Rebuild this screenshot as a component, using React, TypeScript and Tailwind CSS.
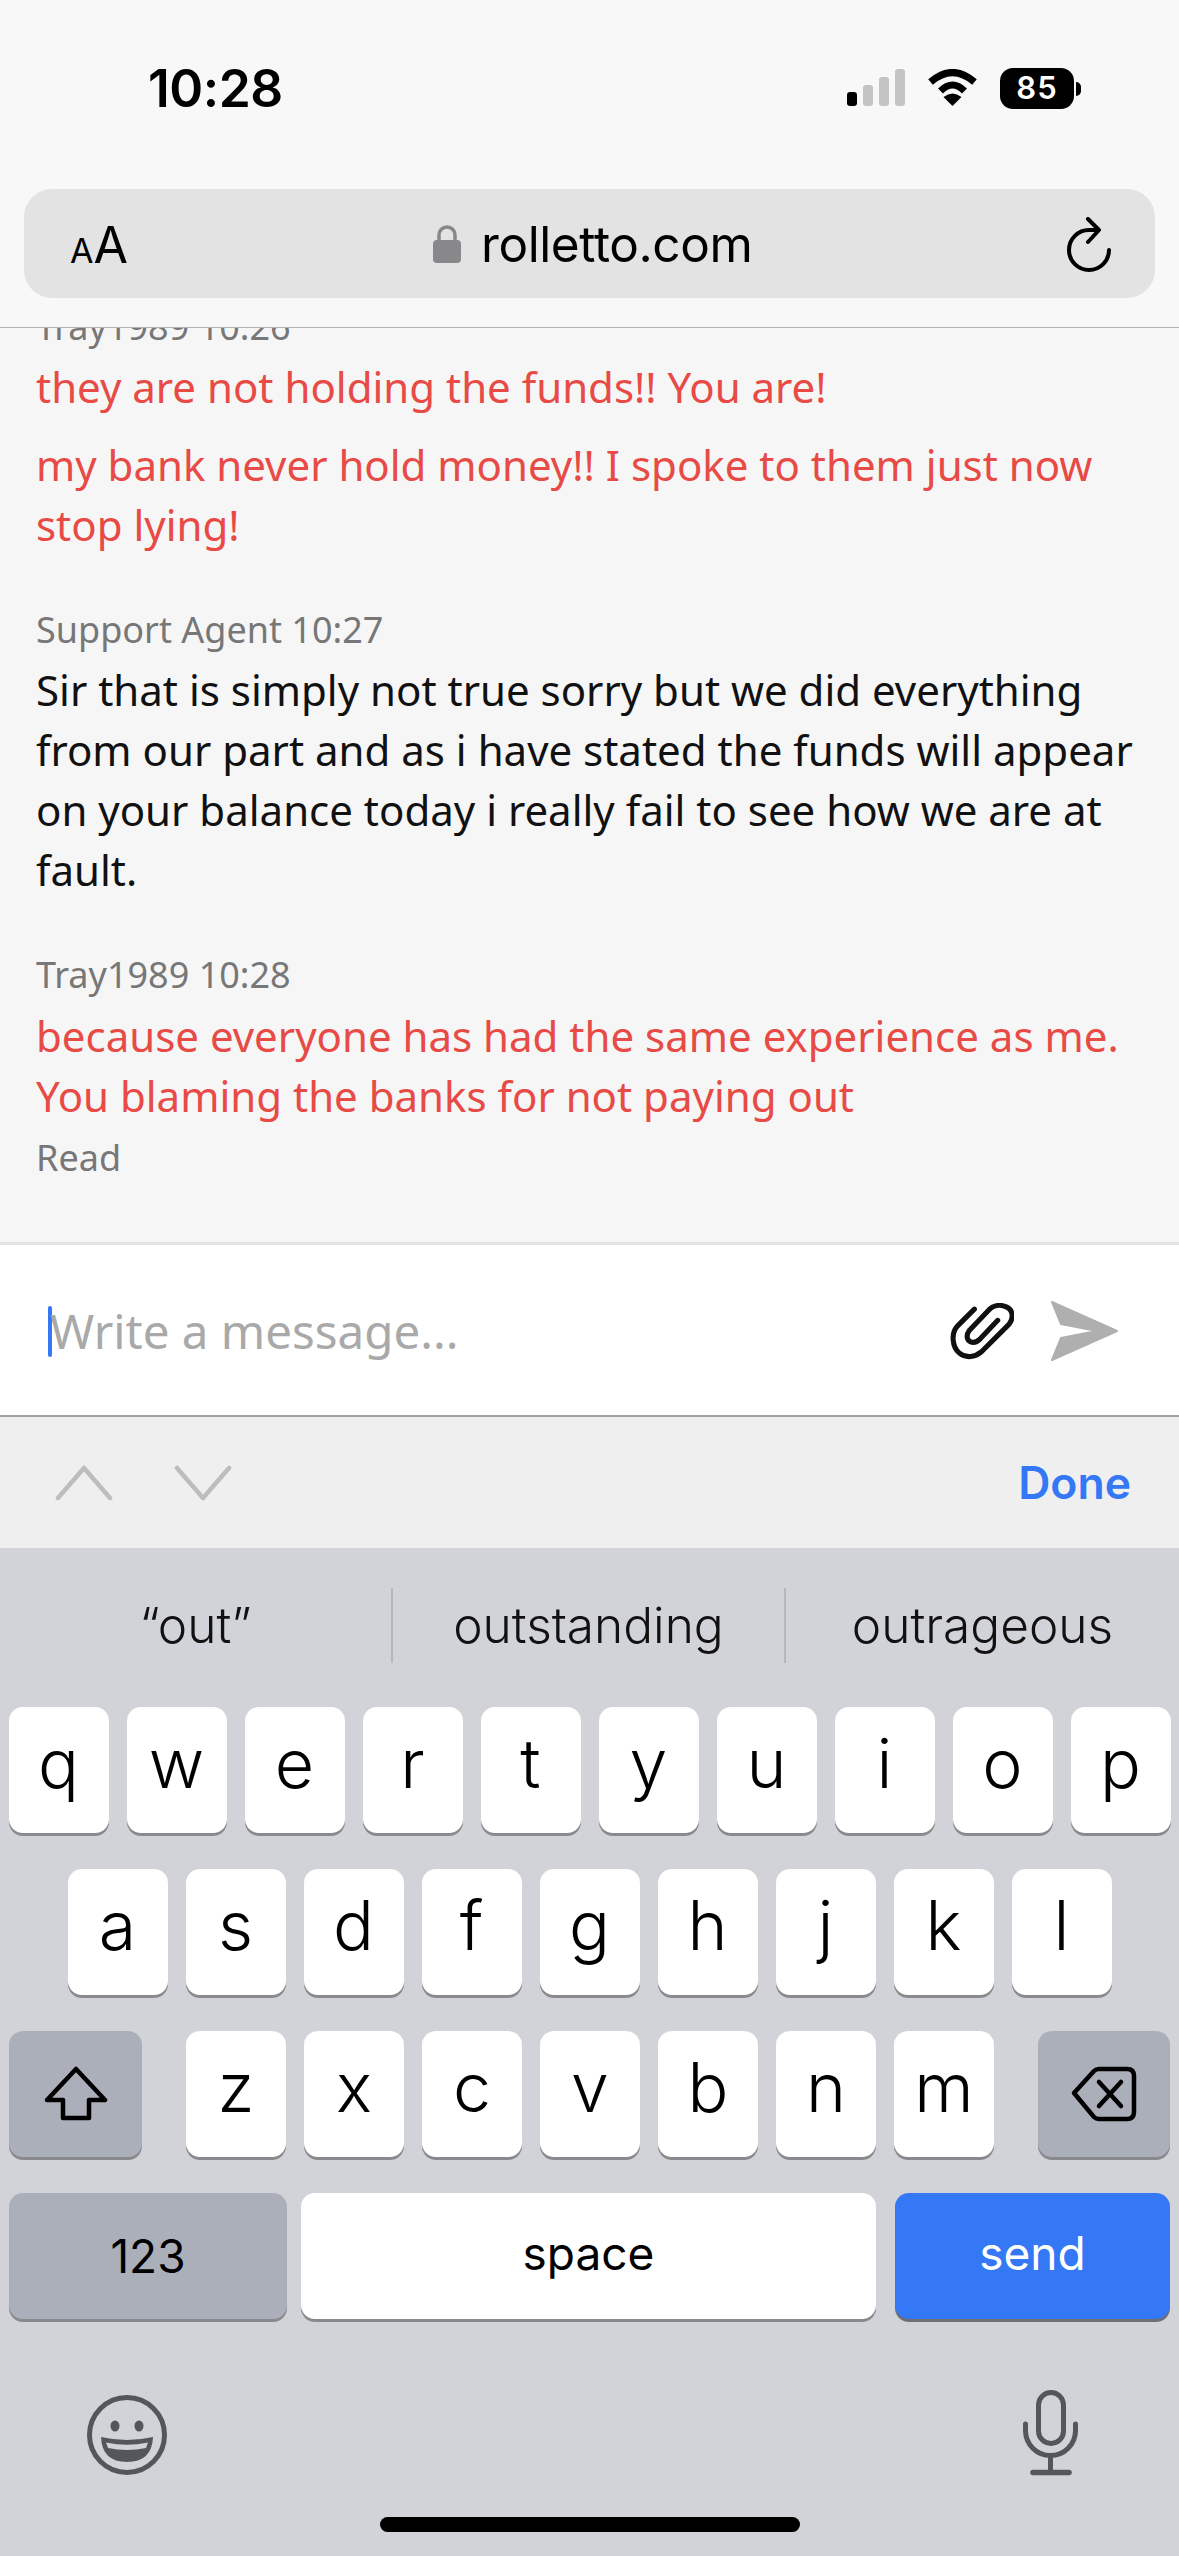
const sans = "font-['Noto_Sans','Open_Sans',sans-serif]";
const ui = "font-['Inter','Liberation_Sans',sans-serif]";

function Key({ label, w = "w-[100px]" }: { label: string; w?: string }) {
  return (
    <div className={`${w} h-[126px] rounded-[14px] bg-white shadow-[0_3px_0_#898a8d] flex items-center justify-center text-[68px] font-light text-black leading-none pb-[14px]`}>
      {label}
    </div>
  );
}

function Shift() {
  return (
    <div className="w-[133px] h-[126px] rounded-[14px] bg-[#abafb9] shadow-[0_3px_0_#898a8d] flex items-center justify-center">
      <svg width="64" height="56" viewBox="0 0 64 56" fill="none" stroke="#000" strokeWidth="4.5" strokeLinejoin="round">
        <path d="M32 3 L61 34 H45 V52 H19 V34 H3 Z" />
      </svg>
    </div>
  );
}

function Del() {
  return (
    <div className="w-[132px] h-[126px] rounded-[14px] bg-[#abafb9] shadow-[0_3px_0_#898a8d] flex items-center justify-center">
      <svg width="66" height="56" viewBox="0 0 66 56" fill="none" stroke="#000" strokeWidth="4.5" strokeLinejoin="round" strokeLinecap="round">
        <path d="M3 27 L23 5 Q25 3 28 3 H56 Q63 3 63 10 V46 Q63 53 56 53 H28 Q25 53 23 51 Z" />
        <path d="M28 16 L50 40 M50 16 L28 40" />
      </svg>
    </div>
  );
}

function Row({ letters }: { letters: string }) {
  return (
    <>
      {letters.split("").map((l) => (
        <Key key={l} label={l} />
      ))}
    </>
  );
}

export default function App() {
  return (
    <div className={`w-[1179px] h-[2556px] flex flex-col overflow-hidden bg-[#d1d3d9] ${ui}`}>
      {/* Browser chrome */}
      <header className="h-[328px] shrink-0 bg-[#f8f8f8] border-b border-[#b1b1b3] px-[24px] flex flex-col">
        <div className="h-[189px] shrink-0 flex justify-between pt-[61px] pl-[124px] pr-[74px]">
          <span className="text-[51.5px] font-semibold leading-[54px] text-black tracking-[-0.5px]">10:28</span>
          <div className="flex items-start gap-[22px] pt-[7px]">
            <svg width="58" height="37" viewBox="0 0 58 37" className="mt-[1px]">
              <rect x="0" y="23" width="10" height="14" rx="3" fill="#000" />
              <rect x="16" y="16" width="10" height="21" rx="3" fill="#c4c4c4" />
              <rect x="32" y="8" width="10" height="29" rx="3" fill="#c4c4c4" />
              <rect x="48" y="0" width="10" height="37" rx="3" fill="#c4c4c4" />
            </svg>
            <svg width="51" height="37" viewBox="0 0 50 37" fill="none" stroke="#000" className="mt-[1px]">
              <path d="M3 13 Q25 -6 47 13" strokeWidth="7" />
              <path d="M13 22 Q25 10 37 22" strokeWidth="7" />
              <path d="M25 37 L16 28 Q25 21 34 28 Z" fill="#000" stroke="none" />
            </svg>
            <div className="flex items-center">
              <div className="w-[74px] h-[41px] rounded-[13px] bg-black text-white text-[31px] font-semibold flex items-center justify-center tracking-[1px]">85</div>
              <div className="w-[5px] h-[14px] rounded-r-full bg-black ml-[2px]" />
            </div>
          </div>
        </div>
        <div className="h-[109px] shrink-0 rounded-[28px] bg-[#e3e3e4] flex items-center justify-between pl-[46px] pr-[43px] relative">
          <div className="flex items-baseline text-black pt-[2px]">
            <span className="text-[34px] leading-none">A</span>
            <span className="text-[50px] leading-none">A</span>
          </div>
          <div className="absolute left-[409px] top-[30px] flex items-center gap-[20px]">
            <svg width="28" height="38" viewBox="0 0 28 38">
              <path d="M6 17 V10 a8 8 0 0 1 16 0 V17" fill="none" stroke="#88888b" strokeWidth="3.5" />
              <rect x="0" y="15" width="28" height="23" rx="4" fill="#88888b" />
            </svg>
            <span className="text-[49.5px] leading-[50px] text-black tracking-[-0.4px]">rolletto.com</span>
          </div>
          <svg width="46" height="56" viewBox="0 0 46 56" fill="none" stroke="#000" strokeWidth="4" strokeLinecap="round" strokeLinejoin="round" className="mt-[2px]">
            <path d="M43 33 A20 20 0 1 1 23 13 H32" />
            <path d="M22 2 L33 13 L22 25" />
          </svg>
        </div>
      </header>

      {/* Conversation */}
      <main className={`h-[917px] shrink-0 overflow-hidden bg-[#f6f6f7] border-b-[3px] border-[#e3e3e3] flex flex-col justify-end px-[36px] pb-[59px] ${sans}`}>
        <p className="text-[36px] leading-[50px] text-[#777] shrink-0">Tray1989 10:26</p>
        <p className="text-[42px] leading-[60px] text-[#e84a45] mt-[5px] shrink-0">they are not holding the funds!! You are!</p>
        <p className="text-[42px] leading-[60px] text-[#e84a45] mt-[18px] shrink-0">my bank never hold money!! I spoke to them just now<br />stop lying!</p>
        <p className="text-[36px] leading-[50px] text-[#777] mt-[50px] shrink-0">Support Agent 10:27</p>
        <p className="text-[42px] leading-[60px] text-[#111] mt-[5px] shrink-0">Sir that is simply not true sorry but we did everything<br />from our part and as i have stated the funds will appear<br />on your balance today i really fail to see how we are at<br />fault.</p>
        <p className="text-[36px] leading-[50px] text-[#777] mt-[50px] shrink-0">Tray1989 10:28</p>
        <p className="text-[42px] leading-[60px] text-[#e84a45] mt-[6px] shrink-0">because everyone has had the same experience as me.<br />You blaming the banks for not paying out</p>
        <p className="text-[36px] leading-[50px] text-[#777] mt-[7px] shrink-0">Read</p>
      </main>

      {/* Composer */}
      <section className={`h-[172px] shrink-0 bg-white border-b-2 border-[#a0a0a3] flex items-center pl-[48px] pr-[60px] pt-[2px] ${sans}`}>
        <div className="w-[4px] h-[51px] rounded-full bg-[#3478f6]" />
        <span className="text-[47.5px] text-[#a9a9a9] leading-none flex-1 -ml-[2px]">Write a message...</span>
        <svg width="64" height="57" viewBox="0 0 63 56" fill="none" stroke="#111" strokeWidth="5" strokeLinecap="round" strokeLinejoin="round" className="mr-[36px]">
          <path d="M24 6 L7 23 C1 30 2 43 9 49 C16 55 25 53 31 48 L58 21 C63 15 62 7 56 4 C50 1 43 2 38 7 L19 27 C16 31 16 36 20 38 C24 40 27 38 30 35 L47 17" />
        </svg>
        <svg width="69" height="62" viewBox="0 0 69 62" fill="#afafaf" stroke="#afafaf" strokeWidth="2" strokeLinejoin="round">
          <path d="M2 2 L67 31 L2 60 L11 38 L47 31 L11 24 Z" />
        </svg>
      </section>

      {/* Input accessory */}
      <section className="h-[131px] shrink-0 bg-[#efeff0] flex items-center pl-[55px] pr-[48px]">
        <svg width="58" height="36" viewBox="0 0 58 36" fill="none" stroke="#bdbdbe" strokeWidth="4.5" strokeLinecap="round" strokeLinejoin="round">
          <path d="M3 33 L29 3 L55 33" />
        </svg>
        <svg width="58" height="36" viewBox="0 0 58 36" fill="none" stroke="#bdbdbe" strokeWidth="4.5" strokeLinecap="round" strokeLinejoin="round" className="ml-[61px]">
          <path d="M3 3 L29 33 L55 3" />
        </svg>
        <span className="ml-auto text-[44.5px] font-semibold text-[#3478f6] leading-none pt-[2px]">Done</span>
      </section>

      {/* Keyboard */}
      <section className="flex-1 min-h-0 bg-[#d1d3d9] flex flex-col">
        <div className="h-[159px] shrink-0 grid grid-cols-[393px_393px_1fr] items-center text-[49.6px] text-[#111] font-light">
          <div className="h-[75px] -mt-[4px] flex items-center justify-center border-r-2 border-[#b5b7bd]">“out”</div>
          <div className="h-[75px] -mt-[4px] flex items-center justify-center border-r-2 border-[#b5b7bd]">outstanding</div>
          <div className="h-[75px] -mt-[4px] flex items-center justify-center">outrageous</div>
        </div>
        <div className="flex justify-center gap-[18px] mb-[36px]"><Row letters="qwertyuiop" /></div>
        <div className="flex justify-center gap-[18px] mb-[36px]"><Row letters="asdfghjkl" /></div>
        <div className="flex justify-between px-[9px] mb-[36px]">
          <Shift />
          <div className="flex gap-[18px]"><Row letters="zxcvbnm" /></div>
          <Del />
        </div>
        <div className="flex px-[9px] text-[46px] font-normal">
          <div className="w-[278px] h-[126px] rounded-[14px] bg-[#abafb9] shadow-[0_3px_0_#898a8d] flex items-center justify-center text-black">123</div>
          <div className="w-[575px] h-[126px] ml-[14px] rounded-[14px] bg-white shadow-[0_3px_0_#898a8d] flex items-center justify-center text-black pb-[6px]">space</div>
          <div className="w-[275px] h-[126px] ml-[19px] rounded-[14px] bg-[#3478f6] shadow-[0_3px_0_#6f6f72] flex items-center justify-center text-white pb-[6px]">send</div>
        </div>
        <div className="flex justify-between items-center pl-[87px] pr-[99px] mt-[71px]">
          <svg width="80" height="80" viewBox="0 0 80 80" className="mt-[4px]">
            <circle cx="40" cy="40" r="37.5" fill="none" stroke="#54565c" strokeWidth="5" />
            <ellipse cx="28" cy="31" rx="4.5" ry="5.5" fill="#54565c" />
            <ellipse cx="52" cy="31" rx="4.5" ry="5.5" fill="#54565c" />
            <path d="M14 42 Q40 48 66 42 Q65 67 40 67 Q15 67 14 42 Z" fill="#54565c" />
            <path d="M19 47.5 Q40 52 61 47.5 L59 53 Q40 57 21 53 Z" fill="#d1d3d9" />
          </svg>
          <svg width="58" height="86" viewBox="0 0 58 86" fill="none" stroke="#54565c" strokeWidth="5" strokeLinecap="round">
            <rect x="16.5" y="2.5" width="25" height="51" rx="12.5" />
            <path d="M3.5 34 V40.5 A25 25 0 0 0 53.5 40.5 V34" />
            <path d="M28.5 66 V82" />
            <path d="M11 82.5 H47" strokeWidth="5.5" />
          </svg>
        </div>
        <div className="w-[420px] h-[15px] rounded-full bg-black self-center mt-[41px]" />
      </section>
    </div>
  );
}
